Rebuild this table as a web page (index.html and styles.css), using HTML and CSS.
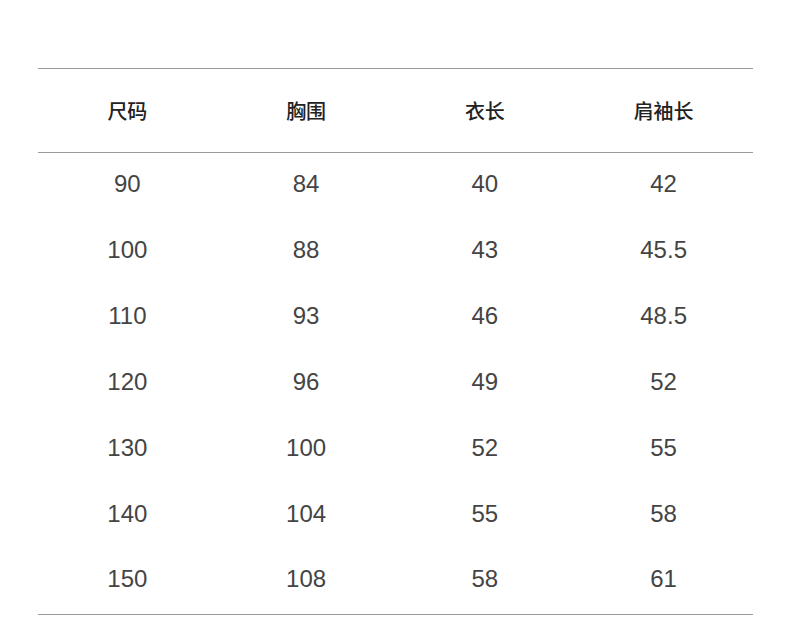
FILE: index.html
```html
<!DOCTYPE html>
<html lang="zh">
<head>
<meta charset="utf-8">
<link rel="stylesheet" href="styles.css">
</head>
<body>
<div class="wrap">
  <table class="size-table">
    <thead>
      <tr><th>尺码</th><th>胸围</th><th>衣长</th><th>肩袖长</th></tr>
    </thead>
    <tbody>
      <tr><td>90</td><td>84</td><td>40</td><td>42</td></tr>
      <tr><td>100</td><td>88</td><td>43</td><td>45.5</td></tr>
      <tr><td>110</td><td>93</td><td>46</td><td>48.5</td></tr>
      <tr><td>120</td><td>96</td><td>49</td><td>52</td></tr>
      <tr><td>130</td><td>100</td><td>52</td><td>55</td></tr>
      <tr><td>140</td><td>104</td><td>55</td><td>58</td></tr>
      <tr><td>150</td><td>108</td><td>58</td><td>61</td></tr>
    </tbody>
  </table>
</div>
</body>
</html>
```
FILE: styles.css
```css
html, body {
  margin: 0;
  padding: 0;
  background: #fff;
}
.wrap {
  padding: 68px 0 0 38px;
}
.size-table {
  width: 715px;
  border-collapse: collapse;
  table-layout: fixed;
}
.size-table thead tr {
  border-top: 1px solid #9a9a9a;
  border-bottom: 1px solid #9a9a9a;
}
.size-table tbody tr:last-child {
  border-bottom: 1px solid #9a9a9a;
}
.size-table th {
  height: 83px;
  padding: 0;
  font-family: "Noto Sans CJK SC", sans-serif;
  font-weight: 500;
  font-size: 20px;
  color: #222;
  text-align: center;
  vertical-align: middle;
}
.size-table td {
  height: 66px;
  padding: 0 0 4px 0;
  box-sizing: border-box;
  font-family: "Liberation Sans", Arial, sans-serif;
  font-size: 24px;
  color: #444;
  text-align: center;
  vertical-align: middle;
}
```
